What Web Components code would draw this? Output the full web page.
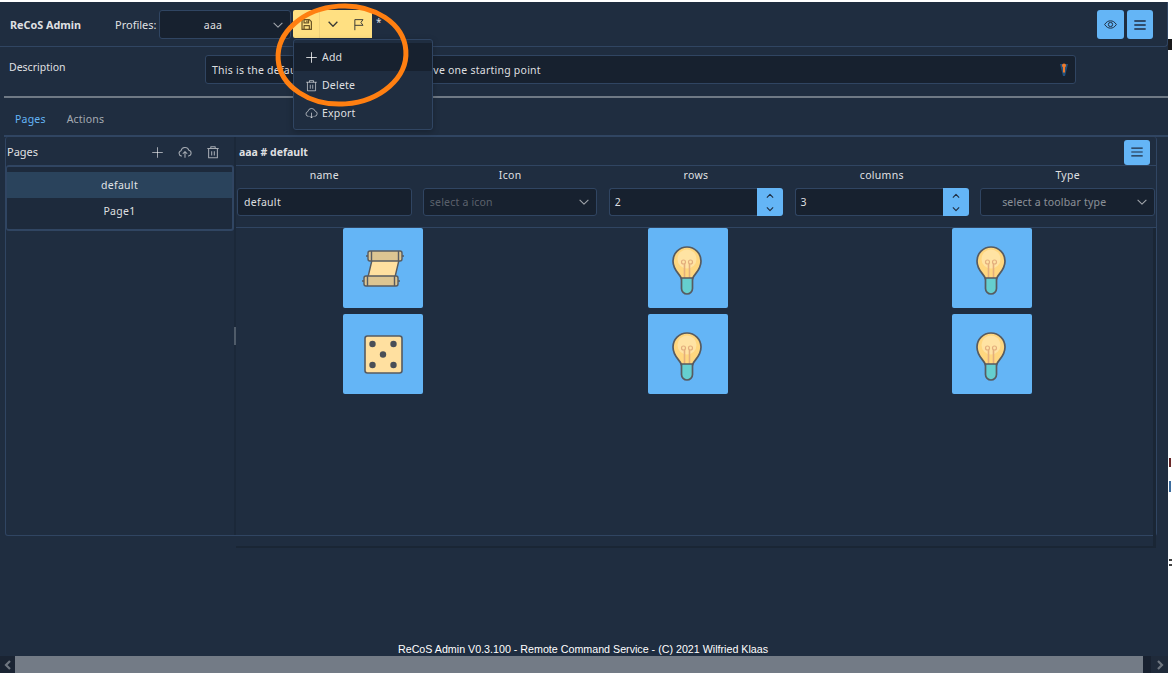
<!DOCTYPE html>
<html lang="en">
<head>
<meta charset="utf-8">
<title>ReCoS Admin</title>
<style>
  html, body { margin: 0; padding: 0; height: 100%; overflow: hidden; background: #fff; }
  body { font: 11px/1.3 "Noto Sans", "Open Sans", sans-serif; color: rgba(255,255,255,.87); }
</style>
</head>
<body>
<recos-app></recos-app>
<script>
(function () {
  "use strict";

  // primeicons look-alikes, all on a 16 box
  const ICONS = {
    save: '<path d="M2.500 2h9l2.500 2.500V14H2.500z"/><path d="M5 2v4h5.500V2M8.500 3.200v1.600"/><path d="M5 14V9.500h6.500V14"/>',
    down: '<path d="M3 5.500l5 5 5-5"/>',
    up: '<path d="M3 10.500l5-5 5 5"/>',
    flag: '<path d="M3.500 15V2h10l-2.500 3.500L13.500 9h-10"/>',
    eye: '<path d="M.8 8C3 4.600 5.400 3.500 8 3.500s5 1.100 7.200 4.500C13 11.400 10.600 12.500 8 12.500S3 11.400.8 8z"/><circle cx="8" cy="8" r="2.600"/>',
    bars: '<path d="M1.500 3.500h13M1.500 8h13M1.500 12.500h13"/>',
    plus: '<path d="M8 1.500v13M1.500 8h13"/>',
    trash: '<path d="M1.500 4h13M5.500 4V2h5v2M3 4v10.500h10V4M6.500 7v5M9.500 7v5"/>',
    upload: '<path d="M4.500 12.500H4A3 3 0 0 1 3.500 6.600 4.600 4.600 0 0 1 12.400 6 3.300 3.300 0 0 1 12 12.500h-.5"/><path d="M8 14.500V8M5.500 10L8 7.500l2.500 2.500"/>',
    download: '<path d="M4.500 11.500H4A3 3 0 0 1 3.500 5.600 4.600 4.600 0 0 1 12.400 5 3.300 3.300 0 0 1 12 11.500h-.5"/><path d="M8 7v6.500M5.500 11L8 13.500l2.500-2.500"/>'
  };

  class RecosIcon extends HTMLElement {
    connectedCallback() {
      const size = this.getAttribute("size") || 14;
      const width = this.getAttribute("stroke") || 1.2;
      this.attachShadow({ mode: "open" }).innerHTML = `
        <style>
          :host { display: inline-flex; flex: none; }
          svg { display: block; fill: none; stroke: currentColor; stroke-linejoin: round; }
        </style>
        <svg width="${size}" height="${size}" viewBox="0 0 16 16" stroke-width="${width}" aria-hidden="true">${ICONS[this.getAttribute("name")] || ""}</svg>`;
    }
  }
  customElements.define("recos-icon", RecosIcon);

  // square blue button, slot holds the icon
  class RecosButton extends HTMLElement {
    constructor() {
      super();
      this.attachShadow({ mode: "open" }).innerHTML = `
        <style>
          :host {
            display: flex; align-items: center; justify-content: center;
            width: 26px; height: 28px; border-radius: 3px; flex: none;
            background: #64b5f6; color: #1f2d40;
          }
        </style>
        <slot></slot>`;
    }
  }
  customElements.define("recos-button", RecosButton);

  class RecosSelect extends HTMLElement {
    constructor() {
      super();
      this.attachShadow({ mode: "open" }).innerHTML = `
        <style>
          :host {
            display: flex; align-items: center; box-sizing: border-box; height: 28px;
            background: #17212f; border: 1px solid #304562; border-radius: 3px;
            color: rgba(255,255,255,.87); padding-right: 5px;
          }
          :host([placeholder]) { color: rgba(255,255,255,.5); }
          :host([align="left"]) { color: rgba(255,255,255,.3); }
          :host([align="left"]) .label { text-align: left; padding-left: 6px; }
          :host([wide]) .label { padding-right: 5px; }
          :host([shift]) .label { padding-right: 8px; }
          .label { flex: 1; text-align: center; white-space: nowrap; font-size: 10.500px; letter-spacing: .2px; padding-top: 2px; }
          recos-icon { color: rgba(255,255,255,.6); }
        </style>
        <span class="label"><slot></slot></span>
        <recos-icon name="down" size="14"></recos-icon>`;
    }
  }
  customElements.define("recos-select", RecosSelect);

  class RecosSpinner extends HTMLElement {
    constructor() {
      super();
      this.attachShadow({ mode: "open" }).innerHTML = `
        <style>
          :host { display: flex; height: 28px; }
          .value {
            flex: 1; box-sizing: border-box; background: #17212f; border: 1px solid #304562; border-right: 0;
            border-radius: 3px 0 0 3px; padding: 7px 5px 0; font-size: 10.500px; letter-spacing: .3px;
          }
          .btns {
            width: 26px; background: #64b5f6; color: #1f2d40; border-radius: 0 3px 3px 0;
            display: flex; flex-direction: column; align-items: center; justify-content: center; gap: 3px;
          }
        </style>
        <div class="value"><slot></slot></div>
        <div class="btns">
          <recos-icon name="up" size="10" stroke="1.800"></recos-icon>
          <recos-icon name="down" size="10" stroke="1.800"></recos-icon>
        </div>`;
    }
  }
  customElements.define("recos-spinner", RecosSpinner);

  class RecosField extends HTMLElement {
    constructor() {
      super();
      this.attachShadow({ mode: "open" }).innerHTML = `
        <style>
          :host { display: block; min-width: 0; }
          .label { height: 22px; line-height: 18px; text-align: center; font-size: 10.500px; letter-spacing: .3px; }
        </style>
        <div class="label"></div>
        <slot></slot>`;
    }
    connectedCallback() {
      this.shadowRoot.querySelector(".label").textContent = this.getAttribute("label");
    }
  }
  customElements.define("recos-field", RecosField);

  class RecosInput extends HTMLElement {
    constructor() {
      super();
      this.attachShadow({ mode: "open" }).innerHTML = `
        <style>
          :host {
            display: flex; align-items: center; box-sizing: border-box; height: 28px;
            background: #17212f; border: 1px solid #304562; border-radius: 3px;
            padding: 0 6px; font-size: 10.500px; letter-spacing: .3px; white-space: nowrap;
          }
          :host([tight]) { letter-spacing: .24px; }
          .txt { flex: 1; padding-top: 2px; }
          ::slotted(svg) { flex: none; }
        </style>
        <span class="txt"><slot></slot></span>
        <slot name="end"></slot>`;
    }
  }
  customElements.define("recos-input", RecosInput);

  const CELL_ART = {
    scroll: `
      <g stroke="#575b60" stroke-width="1.400" stroke-linejoin="round">
        <path d="M29 32h27l-4 17H25z" fill="#ffe0a0"/>
        <rect x="25" y="23" width="34" height="10" rx="2" fill="#dcc592"/>
        <rect x="21" y="48" width="34" height="10" rx="2" fill="#dcc592"/>
        <path d="M28.500 23v10M55.500 23v10M24.500 48v10M51.500 48v10M23 28h2M59 28h2M19 53h2M55 53h2" fill="none"/>
      </g>`,
    dice: `
      <rect x="22" y="22" width="37" height="37" rx="2.500" fill="#ffe0a0" stroke="#575b60" stroke-width="1.600"/>
      <g fill="#4a4f57">
        <circle cx="29.500" cy="30" r="3.200"/><circle cx="50.500" cy="30" r="3.200"/>
        <circle cx="40" cy="40.500" r="3.200"/>
        <circle cx="29.500" cy="51" r="3.200"/><circle cx="50.500" cy="51" r="3.200"/>
      </g>`,
    bulb: `
      <path d="M33.500 51c-1-5-8.500-8-8.500-18a14 14 0 0 1 28 0c0 10-7.500 13-8.500 18z" fill="#ffd77f" stroke="#575b60" stroke-width="1.700"/>
      <circle cx="39" cy="31" r="9.500" fill="#ffe3a3"/>
      <path d="M36.500 50V36M41.500 50V36" stroke="#e3ae7d" stroke-width="1.600" fill="none"/>
      <circle cx="35.500" cy="34" r="2" fill="none" stroke="#e3ae7d" stroke-width="1.200"/>
      <circle cx="42.500" cy="34" r="2" fill="none" stroke="#e3ae7d" stroke-width="1.200"/>
      <path d="M33.500 50h11v10.500a5.500 5.500 0 0 1-11 0z" fill="#65cfcf" stroke="#575b60" stroke-width="1.700"/>`
  };

  class RecosCell extends HTMLElement {
    connectedCallback() {
      this.attachShadow({ mode: "open" }).innerHTML = `
        <style>
          :host { display: block; width: 80px; height: 80px; border-radius: 2px; background: #64b5f6; }
          svg { display: block; }
        </style>
        <svg width="80" height="80" viewBox="0 0 80 80">${CELL_ART[this.getAttribute("art")]}</svg>`;
    }
  }
  customElements.define("recos-cell", RecosCell);

  class RecosHeader extends HTMLElement {
    constructor() {
      super();
      this.attachShadow({ mode: "open" }).innerHTML = `
        <style>
          :host {
            display: flex; align-items: flex-start; box-sizing: border-box; height: 45px;
            padding: 8px 14px 0 10px; border: solid #304562; border-width: 0 1px 1px 0;
            border-radius: 0 0 4px 0;
          }
          .title { font-weight: 700; font-size: 10.800px; width: 105px; line-height: 29px; }
          .prof { width: 44px; line-height: 29px; }
          recos-select { width: 132px; height: 29px; font-size: 11px; padding-right: 5px; }
          .tools { display: flex; height: 28px; margin-left: 2px; background: #ffe082; color: #3a3a36; border-radius: 2px 0 0 2px; }
          .tools > span { display: flex; align-items: center; justify-content: center; box-sizing: border-box; }
          .tools > span + span { border-left: 1px solid #f1d27a; }
          .save { color: #6b5426; }
          .dirty { margin: 4px 0 0 4px; line-height: 16px; font-size: 10px; }
          .end { margin-left: auto; display: flex; gap: 3px; }
          .end recos-button { height: 29px; }
          .end recos-button:first-child { width: 27px; }
        </style>
        <span class="title">ReCoS Admin</span>
        <span class="prof">Profiles:</span>
        <recos-select wide>aaa</recos-select>
        <div class="tools">
          <span class="save" style="width:26px"><recos-icon name="save" size="13" stroke="1.500"></recos-icon></span>
          <span style="width:26px"><recos-icon name="down" size="14" stroke="1.500"></recos-icon></span>
          <span style="width:27px;border-left:0"><recos-icon name="flag" size="13"></recos-icon></span>
        </div>
        <span class="dirty">*</span>
        <div class="end">
          <recos-button><recos-icon name="eye" size="13"></recos-icon></recos-button>
          <recos-button><recos-icon name="bars" size="14" stroke="1.800"></recos-icon></recos-button>
        </div>`;
    }
  }
  customElements.define("recos-header", RecosHeader);

  class RecosDescription extends HTMLElement {
    constructor() {
      super();
      this.attachShadow({ mode: "open" }).innerHTML = `
        <style>
          :host { display: flex; padding: 8px 92px 12px 9px; }
          .lbl { width: 196px; line-height: 24px; font-size: 10.500px; }
          recos-input { flex: 1; height: 29px; }
        </style>
        <span class="lbl">Description</span>
        <recos-input tight>
          This is the default profile, so you always have one starting point
          <svg slot="end" width="10" height="14" viewBox="0 0 10 14">
            <path d="M1 1h8L6 13H4z" fill="#24507a"/>
            <circle cx="5" cy="2.500" r="2" fill="#ee7a2c"/>
            <path d="M5 3v6.500" stroke="#ee7a2c" stroke-width="2"/>
          </svg>
        </recos-input>`;
    }
  }
  customElements.define("recos-description", RecosDescription);

  class RecosTabs extends HTMLElement {
    constructor() {
      super();
      this.attachShadow({ mode: "open" }).innerHTML = `
        <style>
          :host {
            display: flex; box-sizing: border-box; height: 41px; gap: 21px; padding: 13px 0 0 11px;
            border-top: 2px solid #6f7985; margin-left: 4px;
            border-bottom: 2px solid #304562; font-size: 10.500px; letter-spacing: .2px;
          }
          .on { color: #64b5f6; }
          span { color: rgba(255,255,255,.6); line-height: 16px; }
        </style>
        <span class="on">Pages</span>
        <span>Actions</span>`;
    }
  }
  customElements.define("recos-tabs", RecosTabs);

  class RecosPagesPanel extends HTMLElement {
    constructor() {
      super();
      this.attachShadow({ mode: "open" }).innerHTML = `
        <style>
          :host { display: block; width: 228px; flex: none; }
          header { display: flex; align-items: center; box-sizing: border-box; height: 28px; padding: 2px 14px 0 1px; font-size: 11px; }
          header b { font-weight: 400; flex: 1; }
          header recos-icon { margin-left: 14px; color: rgba(255,255,255,.6); }
          ul {
            list-style: none; margin: 0; padding: 5px 0 0; height: 66px; box-sizing: border-box;
            border: solid #304562; border-width: 2px 2px 2px 1px; border-radius: 3px;
            background: #1d2a3c; font-size: 10.500px; letter-spacing: .3px;
          }
          li { height: 26px; line-height: 26px; text-align: center; }
          li.sel { background: #2a435c; }
        </style>
        <header>
          <b>Pages</b>
          <recos-icon name="plus" size="13"></recos-icon>
          <recos-icon name="upload" size="14"></recos-icon>
          <recos-icon name="trash" size="14"></recos-icon>
        </header>
        <ul><li class="sel">default</li><li>Page1</li></ul>`;
    }
  }
  customElements.define("recos-pages-panel", RecosPagesPanel);

  class RecosPageEditor extends HTMLElement {
    constructor() {
      super();
      this.attachShadow({ mode: "open" }).innerHTML = `
        <style>
          :host { display: block; flex: 1; min-width: 0; height: 410px; box-sizing: border-box; }
          header {
            display: flex; align-items: center; justify-content: space-between; box-sizing: border-box;
            height: 29px; padding: 2px 6px 0 3px; border-bottom: 1px solid #304562; font-weight: 700; font-size: 10.500px;
          }
          header span { padding-top: 2px; }
          header recos-button { height: 25px; }
          form {
            display: grid; grid-template-columns: repeat(5, 1fr); gap: 11.250px; padding: 0 1px 11px 1px;
            border-bottom: 1px solid #304562;
          }
          .cells {
            display: grid; grid-template-columns: repeat(3, 80px); grid-auto-rows: 80px;
            justify-content: space-between; row-gap: 6px; box-sizing: border-box;
            height: 320px; padding: 0 121px 0 107px;
            border-right: 3px solid #1a2635; border-bottom: 2px solid #1a2635;
          }
        </style>
        <header>
          <span>aaa # default</span>
          <recos-button><recos-icon name="bars" size="14" stroke="1.300"></recos-icon></recos-button>
        </header>
        <form>
          <recos-field label="name"><recos-input>default</recos-input></recos-field>
          <recos-field label="Icon"><recos-select placeholder align="left">select a icon</recos-select></recos-field>
          <recos-field label="rows"><recos-spinner>2</recos-spinner></recos-field>
          <recos-field label="columns"><recos-spinner>3</recos-spinner></recos-field>
          <recos-field label="Type"><recos-select placeholder shift>select a toolbar type</recos-select></recos-field>
        </form>
        <div class="cells">
          <recos-cell art="scroll"></recos-cell>
          <recos-cell art="bulb"></recos-cell>
          <recos-cell art="bulb"></recos-cell>
          <recos-cell art="dice"></recos-cell>
          <recos-cell art="bulb"></recos-cell>
          <recos-cell art="bulb"></recos-cell>
        </div>`;
    }
  }
  customElements.define("recos-page-editor", RecosPageEditor);

  class RecosSplitter extends HTMLElement {
    constructor() {
      super();
      this.attachShadow({ mode: "open" }).innerHTML = `
        <style>
          :host {
            display: flex; box-sizing: border-box; height: 399px; margin: 0 11px 0 5px;
            border: 1px solid #304562; border-top: 0; border-radius: 3px;
          }
          .gutter { width: 2px; flex: none; background: #1b2839; position: relative; }
          .gutter::after {
            content: ""; position: absolute; left: 0; top: 190px; width: 2px; height: 18px; background: #4f5b69;
          }
        </style>
        <slot name="left"></slot>
        <div class="gutter"></div>
        <slot name="right"></slot>`;
    }
  }
  customElements.define("recos-splitter", RecosSplitter);

  class RecosMenu extends HTMLElement {
    constructor() {
      super();
      this.attachShadow({ mode: "open" }).innerHTML = `
        <style>
          :host {
            position: absolute; left: 293px; top: 37px; width: 140px; height: 91px; box-sizing: border-box;
            padding: 3px 0 1px; background: #1f2d40; border: 1px solid #304562; border-radius: 3px;
            box-shadow: 0 2px 6px rgba(0,0,0,.25); font-size: 10.500px; letter-spacing: .2px;
          }
          div { display: flex; align-items: center; gap: 4px; box-sizing: border-box; height: 28px; padding: 1px 0 0 11px; color: rgba(255,255,255,.87); }
          div.hover { background: #17212f; }
          recos-icon { color: rgba(255,255,255,.6); }
          div.hover recos-icon { color: rgba(255,255,255,.8); }
        </style>
        <div class="hover"><recos-icon name="plus" size="13"></recos-icon>Add</div>
        <div><recos-icon name="trash" size="13"></recos-icon>Delete</div>
        <div><recos-icon name="download" size="13"></recos-icon>Export</div>`;
    }
  }
  customElements.define("recos-menu", RecosMenu);

  class RecosScrollbar extends HTMLElement {
    constructor() {
      super();
      this.attachShadow({ mode: "open" }).innerHTML = `
        <style>
          :host { display: flex; height: 17px; background: #1a2433; }
          .thumb { flex: 1; background: #737b86; }
          .arrow { width: 15px; display: flex; align-items: center; justify-content: center; color: #6f7680; }
          .right { width: 25px; padding-left: 8px; box-sizing: border-box; background: linear-gradient(90deg, #182130 8px, #1f2a3a 8px); }
          svg { display: block; }
        </style>
        <div class="arrow"><svg width="8" height="10" viewBox="0 0 8 10"><path d="M6 1L2 5l4 4" fill="none" stroke="currentColor" stroke-width="2.200"/></svg></div>
        <div class="thumb"></div>
        <div class="arrow right"><svg width="8" height="10" viewBox="0 0 8 10"><path d="M2 1l4 4-4 4" fill="none" stroke="currentColor" stroke-width="2.200"/></svg></div>`;
    }
  }
  customElements.define("recos-scrollbar", RecosScrollbar);

  // the page behind the app window peeks out on the right edge
  class RecosBackdropEdge extends HTMLElement {
    constructor() {
      super();
      this.attachShadow({ mode: "open" }).innerHTML = `
        <style>
          :host { position: absolute; left: 1168px; top: -2px; width: 4px; height: 677px; }
          i { position: absolute; left: 0; width: 4px; }
        </style>
        <i style="top:39px;height:11px;background:#1b1b1d"></i>
        <i style="top:458px;height:9px;width:2px;left:1px;background:#6b2a2a"></i>
        <i style="top:481px;height:11px;width:2px;left:1px;background:#3d6d9e"></i>
        <i style="top:559px;height:2px;left:1px;background:#444"></i>
        <i style="top:564px;height:2px;left:1px;background:#444"></i>`;
    }
  }
  customElements.define("recos-backdrop-edge", RecosBackdropEdge);

  class RecosApp extends HTMLElement {
    constructor() {
      super();
      this.attachShadow({ mode: "open" }).innerHTML = `
        <style>
          :host {
            display: flex; flex-direction: column; position: relative; box-sizing: border-box;
            width: 1168px; height: 671px; margin-top: 2px; background: #1f2d40;
          }
          .foot {
            margin-top: auto; height: 14px; text-align: center; color: #fff;
            font: 10.700px/14px "Liberation Sans", Arial, sans-serif; padding-right: 2px;
          }
          .ring { position: absolute; left: 270px; top: -2px; pointer-events: none; }
        </style>
        <recos-header></recos-header>
        <recos-description></recos-description>
        <recos-tabs></recos-tabs>
        <recos-splitter>
          <recos-pages-panel slot="left"></recos-pages-panel>
          <recos-page-editor slot="right"></recos-page-editor>
        </recos-splitter>
        <div class="foot">ReCoS Admin V0.3.100 - Remote Command Service - (C) 2021 Wilfried Klaas</div>
        <recos-scrollbar></recos-scrollbar>
        <recos-menu></recos-menu>
        <recos-backdrop-edge></recos-backdrop-edge>
        <svg class="ring" width="145" height="112" viewBox="0 0 145 112">
          <ellipse cx="72" cy="55" rx="64" ry="49" transform="rotate(-4 72 55)" fill="none" stroke="#ff7f11" stroke-width="5"/>
        </svg>`;
    }
  }
  customElements.define("recos-app", RecosApp);
})();
</script>
</body>
</html>
